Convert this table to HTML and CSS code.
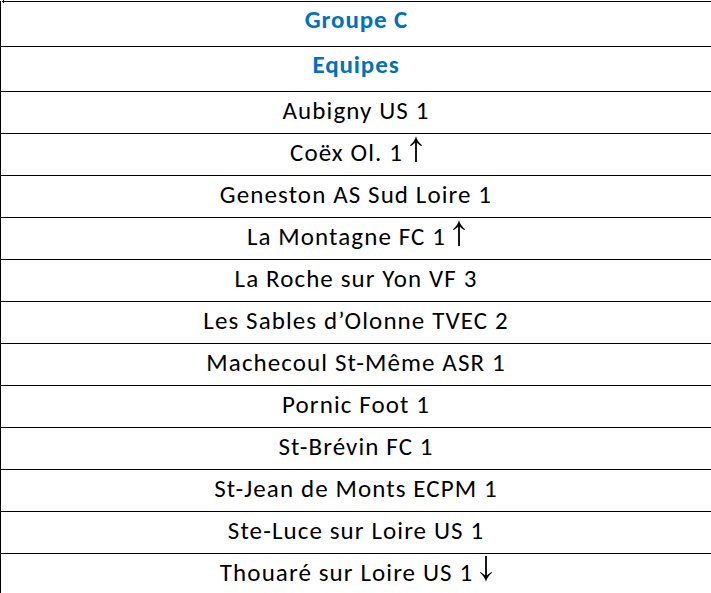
FILE: index.html
```html
<!DOCTYPE html>
<html lang="fr">
<head>
<meta charset="utf-8">
<title>Groupe C</title>
<link rel="stylesheet" href="styles.css">
</head>
<body>
<div class="table">
  <div class="row head first">Groupe C</div>
  <div class="row head">Equipes</div>
  <div class="row">Aubigny US 1</div>
  <div class="row">Coëx Ol. 1<svg class="arrow" viewBox="0 0 12 26" width="12" height="26" aria-hidden="true"><path d="M6 0.3 C6.9 3.8 8.8 6.6 12 9.3 L11.4 10.1 C9.4 8.7 7.8 7.6 6.9 6.4 L6.9 26 L5.1 26 L5.1 6.4 C4.2 7.6 2.6 8.7 0.6 10.1 L0 9.3 C3.2 6.6 5.1 3.8 6 0.3 Z"/></svg></div>
  <div class="row">Geneston AS Sud Loire 1</div>
  <div class="row">La Montagne FC 1<svg class="arrow" viewBox="0 0 12 26" width="12" height="26" aria-hidden="true"><path d="M6 0.3 C6.9 3.8 8.8 6.6 12 9.3 L11.4 10.1 C9.4 8.7 7.8 7.6 6.9 6.4 L6.9 26 L5.1 26 L5.1 6.4 C4.2 7.6 2.6 8.7 0.6 10.1 L0 9.3 C3.2 6.6 5.1 3.8 6 0.3 Z"/></svg></div>
  <div class="row">La Roche sur Yon VF 3</div>
  <div class="row">Les Sables d’Olonne TVEC 2</div>
  <div class="row">Machecoul St-Même ASR 1</div>
  <div class="row">Pornic Foot 1</div>
  <div class="row">St-Brévin FC 1</div>
  <div class="row">St-Jean de Monts ECPM 1</div>
  <div class="row">Ste-Luce sur Loire US 1</div>
  <div class="row">Thouaré sur Loire US 1<svg class="arrow" viewBox="0 0 12 26" width="12" height="26" aria-hidden="true"><path transform="rotate(180 6 13)" d="M6 0.3 C6.9 3.8 8.8 6.6 12 9.3 L11.4 10.1 C9.4 8.7 7.8 7.6 6.9 6.4 L6.9 26 L5.1 26 L5.1 6.4 C4.2 7.6 2.6 8.7 0.6 10.1 L0 9.3 C3.2 6.6 5.1 3.8 6 0.3 Z"/></svg></div>
</div>
</body>
</html>
```
FILE: styles.css
```css
html, body {
  margin: 0;
  padding: 0;
  background: #fff;
}
body {
  font-family: Carlito, Calibri, Lato, "Open Sans", sans-serif;
  font-size: 25px;
  letter-spacing: 1.1px;
  color: #000;
}
.table {
  position: relative;
  display: flex;
  flex-direction: column;
  border-left: 1px solid #000;
  margin-top: 1px;
  width: 710px;
}
.table::before {
  content: "";
  position: absolute;
  left: 2px;
  top: -1px;
  width: 1px;
  height: 3px;
  background: #000;
}
.row {
  display: flex;
  align-items: center;
  justify-content: center;
  height: 42px;
  box-sizing: border-box;
  border-top: 1px solid #000;
  padding-bottom: 4px;
  white-space: nowrap;
}
.row.head {
  height: 45px;
  color: #0070c0;
  font-weight: bold;
  letter-spacing: 0.9px;
  padding-bottom: 9px;
}
.row.first {
  margin-left: 1px;
}
.arrow {
  margin-left: 7px;
  align-self: center;
  margin-top: -8px;
  fill: #000;
}
```
